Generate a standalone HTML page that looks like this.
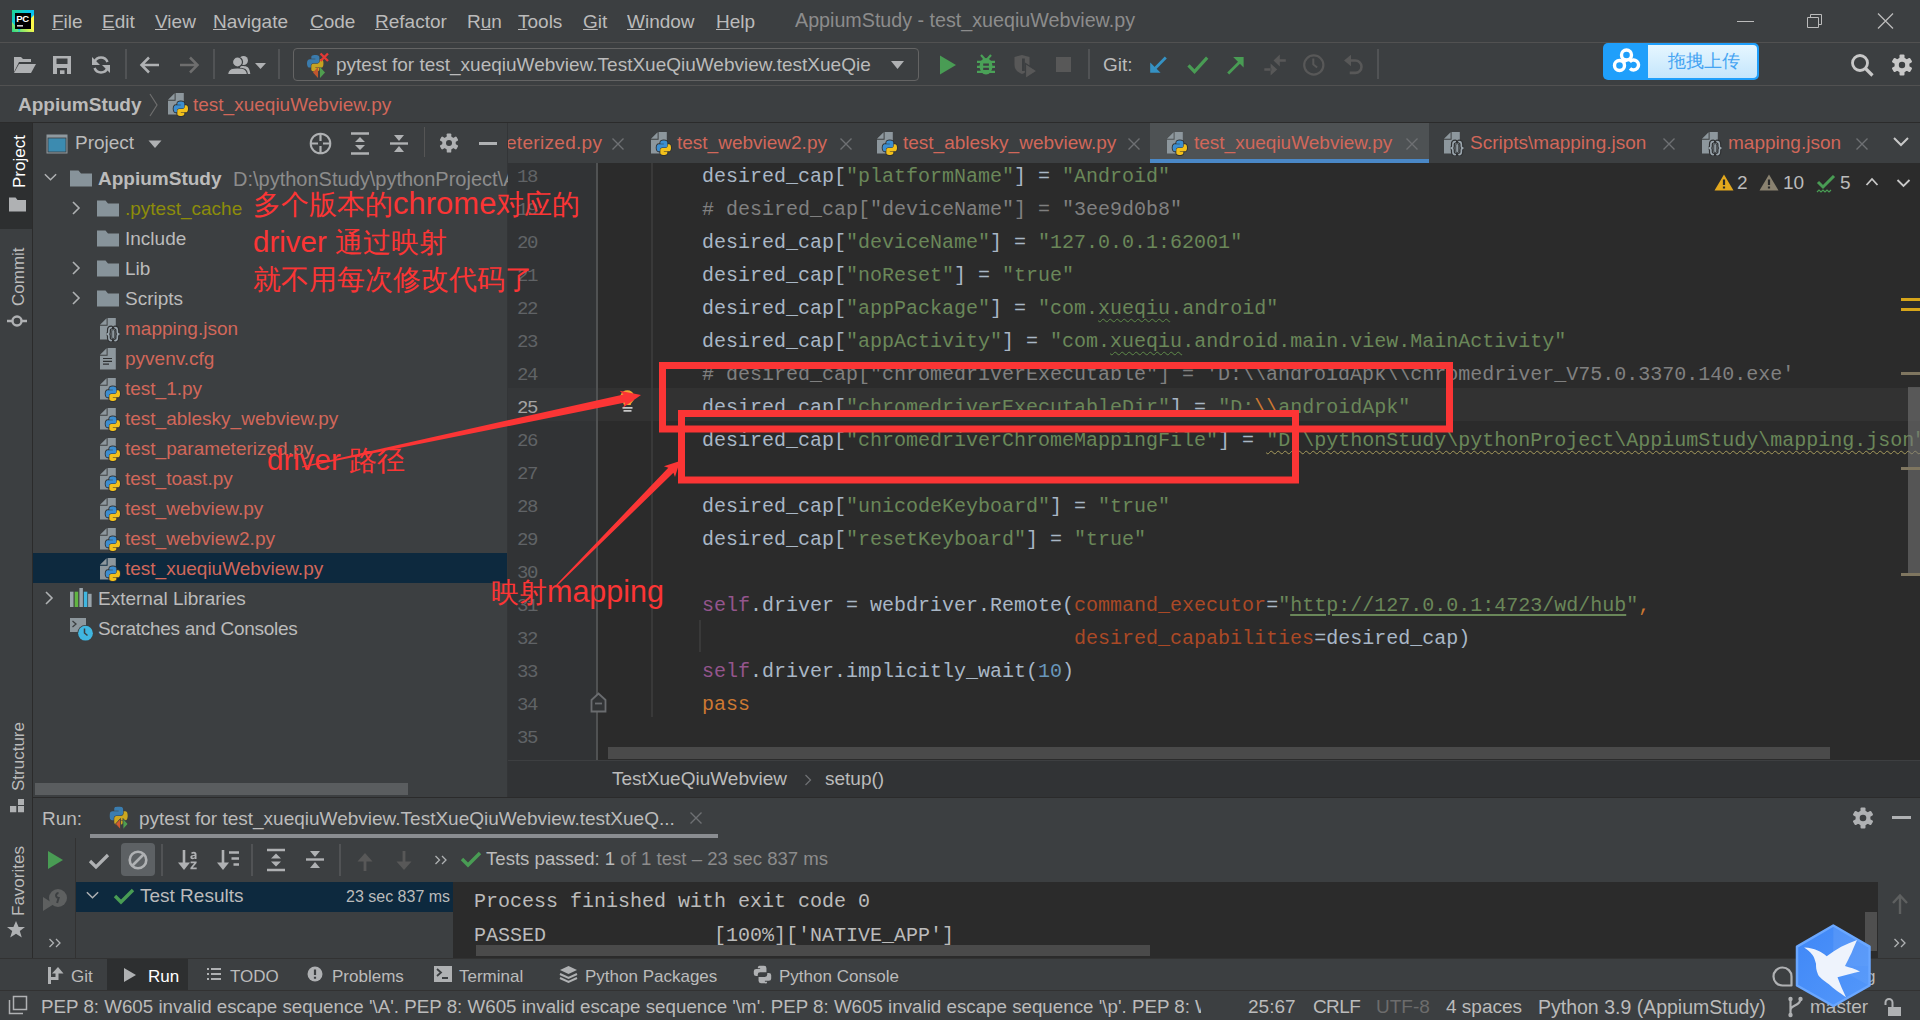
<!DOCTYPE html>
<html><head><meta charset="utf-8">
<style>
*{margin:0;padding:0;box-sizing:border-box}
html,body{width:1920px;height:1020px;overflow:hidden;background:#3c3f41;font-family:"Liberation Sans",sans-serif;color:#bbbbbb}
.a{position:absolute}
.t{position:absolute;white-space:pre;font-size:19px;line-height:22px}
.mono{font-family:"Liberation Mono",monospace}
s1{color:#6a8759;text-decoration:none}c1{color:#808080}k1{color:#cc7832}p1{color:#94558d}n1{color:#aa4926}d1{color:#6897bb}u1{text-decoration:underline;text-decoration-color:#6a8759;text-underline-offset:3px}w1{text-decoration:underline wavy #5f8a4a;text-decoration-thickness:1px;text-underline-offset:4px}w2{text-decoration:underline wavy #a69a5c;text-decoration-thickness:1px;text-underline-offset:4px}
.hl{position:absolute;height:1px;background:#323232}
.vl{position:absolute;width:1px;background:#323232}
</style></head><body>

<svg width="0" height="0" style="position:absolute">
<defs>
<symbol id="doc" viewBox="0 0 24 24"><path d="M1 6.8L7.6 0.2V6.8z" fill="#8d979d"/><path d="M8.6 0H16.8V21.4H1V7.8H8.6z" fill="#8d979d"/></symbol>
<symbol id="pylogo" viewBox="0 0 111 111"><path d="M54.919 0.001c-4.584.022-8.961.413-12.813 1.095C30.76 3.099 28.7 7.295 28.7 15.032v10.219h26.813v3.406H18.638c-7.793 0-14.616 4.684-16.75 13.594-2.462 10.213-2.571 16.586 0 27.25 1.905 7.938 6.457 13.594 14.25 13.594h9.219v-12.25c0-8.85 7.657-16.656 16.75-16.656h26.781c7.454 0 13.406-6.138 13.406-13.625V15.032c0-7.266-6.13-12.725-13.406-13.937C64.282.328 59.502-.02 54.919.001z" fill="#3a8fd0"/><path d="M85.638 28.657v11.906c0 9.231-7.826 17-16.75 17H42.106c-7.336 0-13.406 6.278-13.406 13.625v25.531c0 7.266 6.319 11.54 13.406 13.625 8.487 2.496 16.626 2.947 26.781 0 6.75-1.954 13.406-5.888 13.406-13.625V86.501H55.513v-3.406H95.7c7.793 0 10.696-5.436 13.406-13.594 2.8-8.399 2.68-16.476 0-27.25-1.926-7.757-5.604-13.594-13.406-13.594h-10.062z" fill="#f5c518"/></symbol>
<symbol id="pyf" viewBox="0 0 24 24"><use href="#doc"/>
<g transform="translate(6.6 8.5) scale(0.13)"><path d="M54.919 0.001c-4.584.022-8.961.413-12.813 1.095C30.76 3.099 28.7 7.295 28.7 15.032v10.219h26.813v3.406H18.638c-7.793 0-14.616 4.684-16.75 13.594-2.462 10.213-2.571 16.586 0 27.25 1.905 7.938 6.457 13.594 14.25 13.594h9.219v-12.25c0-8.85 7.657-16.656 16.75-16.656h26.781c7.454 0 13.406-6.138 13.406-13.625V15.032c0-7.266-6.13-12.725-13.406-13.937C64.282.328 59.502-.02 54.919.001z" fill="none" stroke="#2f3133" stroke-width="14"/><path d="M85.638 28.657v11.906c0 9.231-7.826 17-16.75 17H42.106c-7.336 0-13.406 6.278-13.406 13.625v25.531c0 7.266 6.319 11.54 13.406 13.625 8.487 2.496 16.626 2.947 26.781 0 6.75-1.954 13.406-5.888 13.406-13.625V86.501H55.513v-3.406H95.7c7.793 0 10.696-5.436 13.406-13.594 2.8-8.399 2.68-16.476 0-27.25-1.926-7.757-5.604-13.594-13.406-13.594h-10.062z" fill="none" stroke="#2f3133" stroke-width="14"/><path d="M54.919 0.001c-4.584.022-8.961.413-12.813 1.095C30.76 3.099 28.7 7.295 28.7 15.032v10.219h26.813v3.406H18.638c-7.793 0-14.616 4.684-16.75 13.594-2.462 10.213-2.571 16.586 0 27.25 1.905 7.938 6.457 13.594 14.25 13.594h9.219v-12.25c0-8.85 7.657-16.656 16.75-16.656h26.781c7.454 0 13.406-6.138 13.406-13.625V15.032c0-7.266-6.13-12.725-13.406-13.937C64.282.328 59.502-.02 54.919.001z" fill="#3d8ed0"/><path d="M85.638 28.657v11.906c0 9.231-7.826 17-16.75 17H42.106c-7.336 0-13.406 6.278-13.406 13.625v25.531c0 7.266 6.319 11.54 13.406 13.625 8.487 2.496 16.626 2.947 26.781 0 6.75-1.954 13.406-5.888 13.406-13.625V86.501H55.513v-3.406H95.7c7.793 0 10.696-5.436 13.406-13.594 2.8-8.399 2.68-16.476 0-27.25-1.926-7.757-5.604-13.594-13.406-13.594h-10.062z" fill="#f2c01b"/></g>
</symbol>
<symbol id="jsonf" viewBox="0 0 24 24"><use href="#doc"/>
<g fill="none" stroke-linecap="round"><path d="M12.3 9.6C10.6 9.6 9.9 10.4 9.9 12.2V14.2C9.9 15.2 9.2 16 7.8 16.1C9.2 16.2 9.9 17 9.9 18V20C9.9 21.8 10.6 22.6 12.3 22.6M15.9 9.6C17.6 9.6 18.3 10.4 18.3 12.2V14.2C18.3 15.2 19 16 20.4 16.1C19 16.2 18.3 17 18.3 18V20C18.3 21.8 17.6 22.6 15.9 22.6" stroke="#2f3133" stroke-width="4"/>
<path d="M12.3 9.6C10.6 9.6 9.9 10.4 9.9 12.2V14.2C9.9 15.2 9.2 16 7.8 16.1C9.2 16.2 9.9 17 9.9 18V20C9.9 21.8 10.6 22.6 12.3 22.6M15.9 9.6C17.6 9.6 18.3 10.4 18.3 12.2V14.2C18.3 15.2 19 16 20.4 16.1C19 16.2 18.3 17 18.3 18V20C18.3 21.8 17.6 22.6 15.9 22.6" stroke="#9aa5ad" stroke-width="1.6"/></g>
<rect x="12.7" y="11.6" width="3" height="9" rx="1.5" fill="#8d979d" stroke="#2f3133" stroke-width="0.8"/>
</symbol>
<symbol id="txtf" viewBox="0 0 24 24"><use href="#doc"/><path d="M4 10.5h9M4 13.3h9M4 16.1h6" stroke="#2f3133" stroke-width="1.2"/></symbol>
<symbol id="fold" viewBox="0 0 22 17"><path d="M0 0.5h8.5l2.5 3H22V16.5H0z" fill="#87939a"/></symbol>
<symbol id="chevr" viewBox="0 0 10 16"><path d="M2 2l6 6l-6 6" fill="none" stroke="#afb1b3" stroke-width="1.6"/></symbol>
<symbol id="chevd" viewBox="0 0 16 10"><path d="M2 2l6 6l6-6" fill="none" stroke="#afb1b3" stroke-width="1.6"/></symbol>
<symbol id="xcl" viewBox="0 0 14 14"><path d="M1.5 1.5l11 11M12.5 1.5l-11 11" stroke="#6e7073" stroke-width="1.4"/></symbol>
<symbol id="gear" viewBox="0 0 22 22"><g fill="#afb1b3"><circle cx="11" cy="11" r="7.5"/><rect x="8.5" y="0.5" width="5" height="21" rx="1"/><rect x="8.5" y="0.5" width="5" height="21" rx="1" transform="rotate(60 11 11)"/><rect x="8.5" y="0.5" width="5" height="21" rx="1" transform="rotate(120 11 11)"/></g><circle cx="11" cy="11" r="3.3" fill="#3c3f41"/></symbol>
</defs></svg>
<!-- ===== TITLE BAR ===== -->
<svg class="a" style="left:12px;top:10px" width="22" height="22" viewBox="0 0 22 22">
<defs><linearGradient id="pcg1" x1="0" y1="0" x2="1" y2="1"><stop offset="0" stop-color="#21d789"/><stop offset="0.45" stop-color="#07c3f2"/><stop offset="1" stop-color="#07c3f2"/></linearGradient><linearGradient id="pcg2" x1="0" y1="1" x2="1" y2="0"><stop offset="0" stop-color="#21d789"/><stop offset="0.55" stop-color="#fcf84a"/><stop offset="1" stop-color="#fcf84a"/></linearGradient></defs>
<rect width="22" height="22" fill="url(#pcg1)"/><path d="M0 22L0 12L8 22z M22 22V5L6 22z" fill="url(#pcg2)"/><rect x="3" y="3" width="16" height="16" fill="#000"/>
<text x="4.2" y="11.8" font-family="Liberation Sans" font-weight="bold" font-size="9.5" fill="#fff" letter-spacing="-0.3">PC</text>
<rect x="5" y="15.2" width="6" height="1.3" fill="#fff"/></svg>
<div class="t" style="left:52px;top:11px"><u>F</u>ile</div>
<div class="t" style="left:102px;top:11px"><u>E</u>dit</div>
<div class="t" style="left:155px;top:11px"><u>V</u>iew</div>
<div class="t" style="left:213px;top:11px"><u>N</u>avigate</div>
<div class="t" style="left:310px;top:11px"><u>C</u>ode</div>
<div class="t" style="left:375px;top:11px"><u>R</u>efactor</div>
<div class="t" style="left:467px;top:11px">R<u>u</u>n</div>
<div class="t" style="left:518px;top:11px"><u>T</u>ools</div>
<div class="t" style="left:583px;top:11px"><u>G</u>it</div>
<div class="t" style="left:627px;top:11px"><u>W</u>indow</div>
<div class="t" style="left:716px;top:11px"><u>H</u>elp</div>
<div class="t" style="left:795px;top:9px;font-size:19.7px;color:#8c8c8c">AppiumStudy - test_xueqiuWebview.py</div>
<div class="a" style="left:1737px;top:21px;width:17px;height:1px;background:#bbbbbb"></div>
<svg class="a" style="left:1805px;top:12px" width="20" height="18" viewBox="0 0 20 18"><path d="M2.5 5.5h11v10h-11z M5.5 5.5v-3h11v10h-3" fill="none" stroke="#bbbbbb" stroke-width="1"/></svg>
<svg class="a" style="left:1876px;top:12px" width="20" height="18" viewBox="0 0 20 18"><path d="M2 1.5l15 15M17 1.5l-15 15" fill="none" stroke="#bbbbbb" stroke-width="1.3"/></svg>
<!-- ===== TOOLBAR ===== -->
<svg class="a" style="left:13px;top:55px" width="24" height="20" viewBox="0 0 24 20"><path d="M1 2h7l2 2h8v3H6L1 17z" fill="#afb1b3"/><path d="M6 9h17l-5 9H1z" fill="#afb1b3"/></svg>
<svg class="a" style="left:52px;top:55px" width="20" height="20" viewBox="0 0 20 20"><path d="M1 1h18v18H1z M4.5 3.5v5.5h11V3.5z M5 13v6h10v-6z" fill="#afb1b3" fill-rule="evenodd"/><rect x="8" y="15.3" width="4.5" height="3.7" fill="#afb1b3"/></svg>
<svg class="a" style="left:91px;top:55px" width="20" height="20" viewBox="0 0 20 20"><path d="M16.5 7A7 7 0 0 0 3.5 7M3.5 13A7 7 0 0 0 16.5 13" fill="none" stroke="#afb1b3" stroke-width="2.5"/><path d="M1 2v8h8z M19 18v-8h-8z" fill="#afb1b3"/></svg>
<div class="vl" style="left:125px;top:49px;height:30px;width:2px;background:#515355"></div>
<svg class="a" style="left:139px;top:55px" width="21" height="20" viewBox="0 0 21 20"><path d="M20 10H3M10 2.5L2.5 10L10 17.5" fill="none" stroke="#afb1b3" stroke-width="2.5"/></svg>
<svg class="a" style="left:179px;top:55px" width="21" height="20" viewBox="0 0 21 20"><path d="M1 10h17M11 2.5L18.5 10L11 17.5" fill="none" stroke="#6e6e6e" stroke-width="2.5"/></svg>
<div class="vl" style="left:213px;top:49px;height:30px;width:2px;background:#515355"></div>
<svg class="a" style="left:227px;top:55px" width="42" height="20" viewBox="0 0 42 20"><circle cx="16.5" cy="5.5" r="4.5" fill="#afb1b3"/><path d="M13 11c3 0 7 0 8 1.5c1.5 1.5 2 4 2.3 6.5H13z" fill="#afb1b3"/><circle cx="10.5" cy="7" r="5" fill="#afb1b3" stroke="#3c3f41" stroke-width="1.2"/><path d="M0.5 19.5c0.5-4.5 2.5-6.5 10-6.5s9.5 2 10 6.5z" fill="#afb1b3" stroke="#3c3f41" stroke-width="1.2"/><path d="M28 8h11l-5.5 6z" fill="#afb1b3"/></svg>
<div class="vl" style="left:278px;top:49px;height:30px;width:2px;background:#515355"></div>
<div class="a" style="left:293px;top:48px;width:626px;height:33px;border:1px solid #646464;border-radius:4px"></div>
<svg class="a" style="left:306px;top:51px" width="26" height="28" viewBox="0 0 26 28"><g transform="translate(1 4) scale(0.15)" opacity="0.75"><use href="#pylogo" width="111" height="111"/></g><path d="M12 16l-5 5.5l5 5.5z" fill="#c1572e"/><path d="M14 16l5 5.5l-5 5.5z" fill="#4f9e4f"/><path d="M14.5 2.5l7.5 7.5M22 2.5l-7.5 7.5" stroke="#e53935" stroke-width="2.4"/></svg>
<div class="t" style="left:336px;top:54px;color:#bbbbbb">pytest for test_xueqiuWebview.TestXueQiuWebview.testXueQie</div>
<svg class="a" style="left:890px;top:59px" width="16" height="12" viewBox="0 0 16 12"><path d="M1 2h13l-6.5 8z" fill="#afb1b3"/></svg>
<svg class="a" style="left:938px;top:54px" width="20" height="22" viewBox="0 0 20 22"><path d="M2 1.5l16 9.5l-16 9.5z" fill="#499c54"/></svg>
<svg class="a" style="left:976px;top:53px" width="20" height="23" viewBox="0 0 20 23"><path d="M5 2l3.5 4M15 2l-3.5 4" stroke="#4aa157" stroke-width="2.2"/><ellipse cx="10" cy="13.3" rx="6.5" ry="8.3" fill="#4aa157"/><path d="M1 8.8h18M1 13.9h18M1 18.8h18" stroke="#4aa157" stroke-width="2.3"/><path d="M7.2 10.5h5.7v2.3H7.2zM7.2 14.8h5.7v2.2H7.2z" fill="#3c3f41"/></svg>
<svg class="a" style="left:1013px;top:54px" width="26" height="25" viewBox="0 0 26 25"><path d="M1.5 3l7.5-2l7.5 2v8c0 5-4 7.5-7.5 9c-3.5-1.5-7.5-4-7.5-9z" fill="#585858"/><path d="M9 4.5h2.8V17H9z" fill="#3c3f41"/><path d="M12.5 9.5l11.5 7.5l-11.5 7.5z" fill="#585858" stroke="#3c3f41" stroke-width="1.2"/></svg>
<div class="a" style="left:1056px;top:57px;width:15px;height:15px;background:#585858"></div>
<div class="vl" style="left:1088px;top:49px;height:30px;width:2px;background:#515355"></div>
<div class="t" style="left:1103px;top:54px">Git:</div>
<svg class="a" style="left:1140px;top:48px" width="236" height="34" viewBox="1140 48 236 34">
<path d="M1165.8 57.6L1154.5 68.9" stroke="#3592c4" stroke-width="2.8"/><path d="M1150.2 62.6V72.8H1160.6z" fill="#3592c4"/>
<path d="M1188.5 65.3l6 6.3l12.7-14" fill="none" stroke="#499c54" stroke-width="3.2"/>
<path d="M1228.2 73.6L1239.5 62.3" stroke="#499c54" stroke-width="2.8"/><path d="M1233.2 57.1H1243.6V67.5z" fill="#499c54"/>
<path d="M1273.5 60.5L1279.8 54.6V66.4z M1279 59.2h6.8v2.6H1279z M1277.2 69.5L1270.6 63.4V75.6z M1264.3 68.2h7v2.6H1264.3z" fill="#585858"/>
<circle cx="1313.8" cy="65" r="9.6" fill="none" stroke="#585858" stroke-width="2.2"/><path d="M1313.3 58.6v5.8l3.8 3.2" fill="none" stroke="#585858" stroke-width="2"/>
<path d="M1344 60.5L1351 54.8V66.2z" fill="#585858"/><path d="M1350 60.5h5.3a6.2 6.2 0 0 1 0 12.4h-5.6" fill="none" stroke="#585858" stroke-width="2.6"/>
</svg>
<div class="vl" style="left:1377px;top:49px;height:30px;width:2px;background:#515355"></div>
<!-- baidu upload -->
<div class="a" style="left:1603px;top:43px;width:156px;height:37px;border-radius:5px;background:#1f9ffb"></div>
<div class="a" style="left:1648px;top:45px;width:109px;height:33px;border-radius:0 4px 4px 0;background:linear-gradient(#e6f6ff,#c4e6fc)"></div>
<svg class="a" style="left:1608px;top:46px" width="38" height="30" viewBox="0 0 38 30"><g fill="none" stroke="#fff" stroke-width="3.4"><circle cx="18.5" cy="9" r="5"/><circle cx="11.5" cy="19.5" r="5"/><path d="M21.7 15.8A5 5 0 1 1 22 22.5"/></g><path d="M15 16.5l4-3" stroke="#fff" stroke-width="3.4"/></svg>
<div class="t" style="left:1668px;top:50px;font-size:18px;color:#45a4f2">拖拽上传</div>
<svg class="a" style="left:1850px;top:53px" width="26" height="24" viewBox="0 0 26 24"><circle cx="10" cy="10" r="7.5" fill="none" stroke="#c8c8c8" stroke-width="2.8"/><path d="M15.5 15.5l7 7" stroke="#c8c8c8" stroke-width="3.2"/></svg>
<svg class="a" style="left:1891px;top:54px" width="22" height="22" viewBox="0 0 22 22"><g fill="#c8c8c8"><circle cx="11" cy="11" r="7.5"/><rect x="8.5" y="0.5" width="5" height="21" rx="1"/><rect x="8.5" y="0.5" width="5" height="21" rx="1" transform="rotate(60 11 11)"/><rect x="8.5" y="0.5" width="5" height="21" rx="1" transform="rotate(120 11 11)"/></g><circle cx="11" cy="11" r="3.2" fill="#3c3f41"/></svg>
<!-- ===== NAVBAR ===== -->
<div class="t" style="left:18px;top:94px;font-weight:bold">AppiumStudy</div>
<svg class="a" style="left:148px;top:93px" width="12" height="24" viewBox="0 0 12 24"><path d="M2 1l7 11l-7 11" fill="none" stroke="#6e6e6e" stroke-width="1.2"/></svg>
<svg class="a" style="left:167px;top:93px" width="24" height="24"><use href="#pyf"/></svg>
<div class="t" style="left:193px;top:94px;color:#d1675a">test_xueqiuWebview.py</div>

<div class="hl" style="left:0;top:42px;width:1920px;background:#515151"></div>
<!-- toolbar -->
<div class="hl" style="left:0;top:85px;width:1920px;background:#515151"></div>
<!-- navbar -->
<div class="hl" style="left:0;top:122px;width:1920px;background:#2b2b2b"></div>
<!-- left strip -->
<div class="a" style="left:0;top:123px;width:32px;height:867px;background:#3c3f41"></div>
<div class="vl" style="left:32px;top:123px;height:835px;background:#2b2b2b"></div>
<!-- project panel -->
<div class="a" style="left:33px;top:123px;width:474px;height:674px;background:#3c3f41"></div>
<div class="vl" style="left:507px;top:123px;height:674px;background:#333537"></div>

<!-- ===== LEFT STRIP ===== -->
<div class="a" style="left:0;top:123px;width:32px;height:106px;background:#2d2f30"></div>
<div class="t" style="left:10.5px;top:188px;font-size:17px;line-height:18px;color:#ffffff;transform:rotate(-90deg);transform-origin:0 0">Project</div>
<svg class="a" style="left:9px;top:197px" width="17" height="15" viewBox="0 0 22 17" preserveAspectRatio="none"><path d="M0 0.5h8.5l2.5 3H22V16.5H0z" fill="#afb1b3"/></svg>
<div class="t" style="left:10px;top:306px;font-size:17px;line-height:18px;color:#bbbbbb;transform:rotate(-90deg);transform-origin:0 0">Commit</div>
<svg class="a" style="left:6px;top:312px" width="22" height="18" viewBox="0 0 22 18"><circle cx="11" cy="9" r="4.5" fill="none" stroke="#afb1b3" stroke-width="2.4"/><path d="M1 9h5M16 9h5" stroke="#afb1b3" stroke-width="2.4"/></svg>
<div class="t" style="left:10px;top:791px;font-size:17px;line-height:18px;color:#bbbbbb;transform:rotate(-90deg);transform-origin:0 0">Structure</div>
<svg class="a" style="left:10px;top:799px" width="14" height="14" viewBox="0 0 14 14"><path d="M0 7h6.3v6.3H0zM8 7h6v6.3H8zM8 0h6v6H8z" fill="#afb1b3"/></svg>
<div class="t" style="left:10px;top:916px;font-size:17px;line-height:18px;color:#bbbbbb;transform:rotate(-90deg);transform-origin:0 0">Favorites</div>
<svg class="a" style="left:6px;top:920px" width="20" height="20" viewBox="0 0 20 20"><path d="M10 1l2.6 6h6.4l-5.2 4l2 6.5L10 13.7l-5.8 3.8l2-6.5L1 7h6.4z" fill="#afb1b3"/></svg>
<!-- ===== PROJECT PANEL ===== -->
<svg class="a" style="left:46px;top:134px" width="22" height="20" viewBox="0 0 22 20"><rect x="0.5" y="0.5" width="21" height="19" fill="#8f999f"/><rect x="2" y="4" width="18" height="14" fill="#3c8bb0" stroke="#3c3f41" stroke-width="0.8"/></svg>
<div class="t" style="left:75px;top:132px">Project</div>
<svg class="a" style="left:148px;top:140px" width="14" height="9" viewBox="0 0 14 9"><path d="M0.5 0.5h13l-6.5 7.5z" fill="#afb1b3"/></svg>
<svg class="a" style="left:309px;top:132px" width="23" height="23" viewBox="0 0 23 23"><circle cx="11.5" cy="11.5" r="9.8" fill="none" stroke="#afb1b3" stroke-width="2"/><path d="M11.5 1v8M11.5 14v8M1 11.5h8M14 11.5h8" stroke="#afb1b3" stroke-width="2.2"/></svg>
<svg class="a" style="left:350px;top:132px" width="20" height="23" viewBox="0 0 20 23"><path d="M1 1.5h18M1 21.5h18" stroke="#afb1b3" stroke-width="2.6"/><path d="M10 5l5 5H5zM10 18l5-5H5z" fill="#afb1b3"/></svg>
<svg class="a" style="left:389px;top:133px" width="20" height="21" viewBox="0 0 20 21"><path d="M1 10.5h18" stroke="#afb1b3" stroke-width="2.4"/><path d="M10 8l5-6H5zM10 13l5 6H5z" fill="#afb1b3"/></svg>
<div class="vl" style="left:424px;top:127px;height:30px;background:#555555"></div>
<svg class="a" style="left:439px;top:133px" width="20" height="20" viewBox="0 0 22 22"><use href="#gear"/></svg>
<div class="a" style="left:479px;top:142px;width:18px;height:3px;background:#afb1b3"></div>
<!-- tree -->
<div class="a" style="left:33px;top:553px;width:474px;height:30px;background:#0d293e"></div>
<svg class="a" style="left:43px;top:172px" width="15" height="10"><use href="#chevd"/></svg>
<svg class="a" style="left:70px;top:170px" width="22" height="17"><use href="#fold"/></svg>
<div class="t" style="left:98px;top:168px;font-weight:bold">AppiumStudy</div>
<div class="t" style="left:233px;top:167.5px;font-size:20px;color:#8c8c8c">D:\pythonStudy\pythonProject\AppiumStudy</div>
<svg class="a" style="left:71px;top:200px" width="10" height="16"><use href="#chevr"/></svg>
<svg class="a" style="left:97px;top:200px" width="22" height="17"><use href="#fold"/></svg>
<div class="t" style="left:125px;top:198px;color:#8c8c0a">.pytest_cache</div>
<svg class="a" style="left:97px;top:230px" width="22" height="17"><use href="#fold"/></svg>
<div class="t" style="left:125px;top:228px">Include</div>
<svg class="a" style="left:71px;top:260px" width="10" height="16"><use href="#chevr"/></svg>
<svg class="a" style="left:97px;top:260px" width="22" height="17"><use href="#fold"/></svg>
<div class="t" style="left:125px;top:258px">Lib</div>
<svg class="a" style="left:71px;top:290px" width="10" height="16"><use href="#chevr"/></svg>
<svg class="a" style="left:97px;top:290px" width="22" height="17"><use href="#fold"/></svg>
<div class="t" style="left:125px;top:288px">Scripts</div>
<svg class="a" style="left:99px;top:318px" width="24" height="24"><use href="#jsonf"/></svg>
<div class="t" style="left:125px;top:318px;color:#d1675a">mapping.json</div>
<svg class="a" style="left:99px;top:348px" width="24" height="24"><use href="#txtf"/></svg>
<div class="t" style="left:125px;top:348px;color:#d1675a">pyvenv.cfg</div>
<svg class="a" style="left:99px;top:378px" width="24" height="24"><use href="#pyf"/></svg>
<div class="t" style="left:125px;top:378px;color:#d1675a">test_1.py</div>
<svg class="a" style="left:99px;top:408px" width="24" height="24"><use href="#pyf"/></svg>
<div class="t" style="left:125px;top:408px;color:#d1675a">test_ablesky_webview.py</div>
<svg class="a" style="left:99px;top:438px" width="24" height="24"><use href="#pyf"/></svg>
<div class="t" style="left:125px;top:438px;color:#d1675a">test_parameterized.py</div>
<svg class="a" style="left:99px;top:468px" width="24" height="24"><use href="#pyf"/></svg>
<div class="t" style="left:125px;top:468px;color:#d1675a">test_toast.py</div>
<svg class="a" style="left:99px;top:498px" width="24" height="24"><use href="#pyf"/></svg>
<div class="t" style="left:125px;top:498px;color:#d1675a">test_webview.py</div>
<svg class="a" style="left:99px;top:528px" width="24" height="24"><use href="#pyf"/></svg>
<div class="t" style="left:125px;top:528px;color:#d1675a">test_webview2.py</div>
<svg class="a" style="left:99px;top:558px" width="24" height="24"><use href="#pyf"/></svg>
<div class="t" style="left:125px;top:558px;color:#d1675a">test_xueqiuWebview.py</div>
<svg class="a" style="left:44px;top:590px" width="10" height="16"><use href="#chevr"/></svg>
<svg class="a" style="left:69px;top:587px" width="24" height="21" viewBox="0 0 24 21"><rect x="1" y="4.7" width="3.5" height="15.3" fill="#9aa4ab"/><rect x="5.7" y="4.7" width="3.5" height="15.3" fill="#62b543"/><rect x="10.4" y="1" width="3.5" height="19" fill="#9aa4ab"/><rect x="14.8" y="4.7" width="3.5" height="15.3" fill="#40b6e0"/><rect x="19.1" y="6.8" width="3.5" height="13.2" fill="#9aa4ab"/></svg>
<div class="t" style="left:98px;top:588px">External Libraries</div>
<svg class="a" style="left:69px;top:617px" width="26" height="25" viewBox="0 0 26 25"><path d="M1 1h16v14H1z" fill="#8d979d"/><path d="M3.5 4l3.5 3l-3.5 3" fill="none" stroke="#3c3f41" stroke-width="1.3"/><circle cx="16.5" cy="16.2" r="8.2" fill="#3c3f41"/><circle cx="16.5" cy="16.2" r="7.4" fill="#40b6e0"/><path d="M15.5 11.5v4.5l3 2.5" fill="none" stroke="#3c3f41" stroke-width="1.5"/></svg>
<div class="t" style="left:98px;top:618px;letter-spacing:-0.3px">Scratches and Consoles</div>
<div class="a" style="left:35px;top:783px;width:373px;height:12px;background:#5a5d5f"></div>

<!-- ===== EDITOR TABS ===== -->
<div class="a" style="left:508px;top:123px;width:1412px;height:40px;background:#3c3f41"></div>
<div class="a" style="left:508px;top:123px;width:100px;height:40px;overflow:hidden"><div class="t" style="left:-2px;top:9px;letter-spacing:0.3px;color:#d1675a">eterized.py</div></div>
<svg class="a" style="left:611px;top:137px" width="14" height="14"><use href="#xcl"/></svg>
<svg class="a" style="left:650px;top:132px" width="24" height="24"><use href="#pyf"/></svg>
<div class="t" style="left:677px;top:132px;color:#d1675a">test_webview2.py</div>
<svg class="a" style="left:839px;top:137px" width="14" height="14"><use href="#xcl"/></svg>
<svg class="a" style="left:876px;top:132px" width="24" height="24"><use href="#pyf"/></svg>
<div class="t" style="left:903px;top:132px;color:#d1675a">test_ablesky_webview.py</div>
<svg class="a" style="left:1127px;top:137px" width="14" height="14"><use href="#xcl"/></svg>
<div class="a" style="left:1150px;top:123px;width:279px;height:40px;background:#4e5254"></div>
<div class="a" style="left:1150px;top:159px;width:279px;height:4px;background:#4a88c7"></div>
<svg class="a" style="left:1166px;top:132px" width="24" height="24"><use href="#pyf"/></svg>
<div class="t" style="left:1194px;top:132px;color:#d1675a">test_xueqiuWebview.py</div>
<svg class="a" style="left:1405px;top:137px" width="14" height="14"><use href="#xcl"/></svg>
<svg class="a" style="left:1443px;top:132px" width="24" height="24"><use href="#jsonf"/></svg>
<div class="t" style="left:1470px;top:132px;color:#d1675a">Scripts\mapping.json</div>
<svg class="a" style="left:1662px;top:137px" width="14" height="14"><use href="#xcl"/></svg>
<svg class="a" style="left:1701px;top:132px" width="24" height="24"><use href="#jsonf"/></svg>
<div class="t" style="left:1728px;top:132px;color:#d1675a">mapping.json</div>
<svg class="a" style="left:1855px;top:137px" width="14" height="14"><use href="#xcl"/></svg>
<svg class="a" style="left:1892px;top:136px" width="18" height="12" viewBox="0 0 18 12"><path d="M2 2l7 7l7-7" fill="none" stroke="#c8c8c8" stroke-width="2"/></svg>
<!-- ===== GUTTER + EDITOR ===== -->
<div class="a" style="left:508px;top:163px;width:90px;height:597px;background:#313335"></div>
<div class="a" style="left:598px;top:163px;width:1322px;height:597px;background:#2b2b2b"></div>
<div class="a" style="left:508px;top:388px;width:90px;height:33px;background:#353739"></div>
<div class="a" style="left:598px;top:388px;width:1322px;height:33px;background:#323232"></div>
<div class="a" style="left:596px;top:163px;width:2px;height:597px;background:#505253"></div>
<div class="a" style="left:651px;top:163px;width:2px;height:554px;background:#393939"></div>
<div class="a" style="left:699px;top:620px;width:2px;height:32px;background:#393939"></div>
<div class="a mono" style="left:508px;top:161px;width:29px;text-align:right;font-size:19px;letter-spacing:-1.4px;line-height:33px;color:#606366;white-space:pre">18
19
20
21
22
23
24
<span style="color:#a4a3a3">25</span>
26
27
28
29
30
31
32
33
34
35</div>
<svg class="a" style="left:590px;top:692px" width="17" height="21" viewBox="0 0 17 21"><path d="M1.5 19.5V8L8.5 1.5L15.5 8V19.5z" fill="#313335" stroke="#6a6c6f" stroke-width="1.8"/><path d="M5 11.5h7" stroke="#6a6c6f" stroke-width="1.8"/></svg>
<div class="a mono" style="left:606px;top:160px;font-size:20px;line-height:33px;color:#a9b7c6;white-space:pre">        desired_cap[<s1>"platformName"</s1>] = <s1>"Android"</s1>
        <c1># desired_cap["deviceName"] = "3ee9d0b8"</c1>
        desired_cap[<s1>"deviceName"</s1>] = <s1>"127.0.0.1:62001"</s1>
        desired_cap[<s1>"noReset"</s1>] = <s1>"true"</s1>
        desired_cap[<s1>"appPackage"</s1>] = <s1>"com.<w1>xueqiu</w1>.android"</s1>
        desired_cap[<s1>"appActivity"</s1>] = <s1>"com.<w1>xueqiu</w1>.android.main.view.MainActivity"</s1>
        <c1># desired_cap["chromedriverExecutable"] = 'D:\\androidApk\\chromedriver_V75.0.3370.140.exe'</c1>
        desired_cap[<s1>"chromedriverExecutableDir"</s1>] = <s1>"D:<k1>\\</k1>androidApk"</s1>
        desired_cap[<s1>"chromedriverChromeMappingFile"</s1>] = <s1><w2>"D:\pythonStudy\pythonProject\AppiumStudy\mapping.json"</w2></s1>

        desired_cap[<s1>"unicodeKeyboard"</s1>] = <s1>"true"</s1>
        desired_cap[<s1>"resetKeyboard"</s1>] = <s1>"true"</s1>

        <p1>self</p1>.driver = webdriver.Remote(<n1>command_executor</n1>=<s1>"<u1>http://127.0.0.1:4723/wd/hub</u1>"</s1><k1>,</k1>
                                       <n1>desired_capabilities</n1>=desired_cap)
        <p1>self</p1>.driver.implicitly_wait(<d1>10</d1>)
        <k1>pass</k1>
</div>
<!-- inspection widget -->
<svg class="a" style="left:1714px;top:174px" width="20" height="17" viewBox="0 0 20 17"><path d="M10 0.5L19.5 16.5H0.5z" fill="#e3a81d"/><path d="M10 5.5v5.5M10 12.5v2" stroke="#2b2b2b" stroke-width="2.2"/></svg>
<div class="t" style="left:1737px;top:172px;font-size:19px">2</div>
<svg class="a" style="left:1759px;top:174px" width="20" height="17" viewBox="0 0 20 17"><path d="M10 0.5L19.5 16.5H0.5z" fill="#8a8270"/><path d="M10 5.5v5.5M10 12.5v2" stroke="#2b2b2b" stroke-width="2.2"/></svg>
<div class="t" style="left:1783px;top:172px;font-size:19px">10</div>
<svg class="a" style="left:1816px;top:175px" width="20" height="19" viewBox="0 0 20 19"><path d="M2 7l5 5l11-11" fill="none" stroke="#499c54" stroke-width="3"/><path d="M1 17l2-2l2 2l2-2l2 2l2-2l2 2l2-2" fill="none" stroke="#499c54" stroke-width="1.2"/></svg>
<div class="t" style="left:1840px;top:172px;font-size:19px">5</div>
<svg class="a" style="left:1865px;top:177px" width="14" height="10" viewBox="0 0 14 10"><path d="M1.5 8l5.5-6l5.5 6" fill="none" stroke="#c8c8c8" stroke-width="1.8"/></svg>
<svg class="a" style="left:1896px;top:178px" width="15" height="10" viewBox="0 0 15 10"><path d="M1.5 2l6 6l6-6" fill="none" stroke="#c8c8c8" stroke-width="1.8"/></svg>
<!-- stripe markers -->
<div class="a" style="left:1901px;top:298px;width:19px;height:3px;background:#d6a51a"></div>
<div class="a" style="left:1901px;top:308px;width:19px;height:3px;background:#d6a51a"></div>
<div class="a" style="left:1901px;top:372px;width:19px;height:3px;background:#7f7660"></div>
<div class="a" style="left:1908px;top:387px;width:12px;height:187px;background:rgba(120,120,120,0.55)"></div>
<div class="a" style="left:1901px;top:467px;width:19px;height:3px;background:#7f7660"></div>
<div class="a" style="left:1901px;top:573px;width:19px;height:3px;background:#7f7660"></div>
<!-- hscroll -->
<div class="a" style="left:608px;top:747px;width:1222px;height:12px;background:#4a4a4a"></div>
<!-- editor breadcrumbs -->
<div class="a" style="left:508px;top:760px;width:1412px;height:37px;background:#313335"></div>
<div class="hl" style="left:508px;top:760px;width:1412px;background:#3d3f41"></div>
<div class="t" style="left:612px;top:768px">TestXueQiuWebview</div>
<svg class="a" style="left:804px;top:773px" width="8" height="14" viewBox="0 0 8 14"><path d="M1.5 2l5 5l-5 5" fill="none" stroke="#6e7073" stroke-width="1.3"/></svg>
<div class="t" style="left:825px;top:768px">setup()</div>
<div class="hl" style="left:33px;top:797px;width:1887px;background:#2b2b2b"></div>

<!-- ===== RUN PANEL ===== -->
<div class="a" style="left:33px;top:798px;width:1887px;height:160px;background:#3c3f41"></div>
<div class="t" style="left:42px;top:808px">Run:</div>
<svg class="a" style="left:109px;top:806px" width="24" height="24" viewBox="0 0 24 24"><g transform="translate(0.5 0.5) scale(0.165)" opacity="0.78"><use href="#pylogo" width="111" height="111"/></g><path d="M7 14h11v9H7z" fill="#c9a53a" opacity="0.0"/><path d="M11.5 12.5l-5 5.5l5 5.5z" fill="#d05a30" stroke="#3c3f41" stroke-width="0.8"/><path d="M14 12.5l5 5.5l-5 5.5z" fill="#4f9e4f" stroke="#3c3f41" stroke-width="0.8"/></svg>
<div class="t" style="left:139px;top:808px">pytest for test_xueqiuWebview.TestXueQiuWebview.testXueQ...</div>
<svg class="a" style="left:689px;top:811px" width="14" height="14"><use href="#xcl"/></svg>
<div class="a" style="left:90px;top:834px;width:628px;height:4px;background:#8a8d91"></div>
<svg class="a" style="left:1852px;top:807px" width="22" height="22" viewBox="0 0 22 22"><use href="#gear"/></svg>
<div class="a" style="left:1892px;top:816px;width:19px;height:3px;background:#afb1b3"></div>
<!-- run left column -->
<div class="vl" style="left:75px;top:838px;height:120px;background:#323232"></div>
<svg class="a" style="left:47px;top:850px" width="17" height="20" viewBox="0 0 17 20"><path d="M1 1l15 9l-15 9z" fill="#499c54"/></svg>
<svg class="a" style="left:42px;top:887px" width="26" height="24" viewBox="0 0 26 24"><path d="M1 10l11 7l-11 7z" fill="#5e6060"/><circle cx="16" cy="11" r="9" fill="#5e6060"/><path d="M16.5 6a2.5 2.5 0 1 0 0.1 5l-1.5 5" fill="none" stroke="#3c3f41" stroke-width="2"/></svg>
<svg class="a" style="left:48px;top:937px" width="14" height="12" viewBox="0 0 14 12"><path d="M1.5 2l4 4l-4 4M8 2l4 4l-4 4" fill="none" stroke="#afb1b3" stroke-width="1.3"/></svg>
<!-- run toolbar -->
<svg class="a" style="left:88px;top:851px" width="22" height="20" viewBox="0 0 22 20"><path d="M2 10l6 6l12-12" fill="none" stroke="#afb1b3" stroke-width="3.2"/></svg>
<div class="a" style="left:121px;top:843px;width:34px;height:33px;border-radius:4px;background:#5d6164"></div>
<svg class="a" style="left:127px;top:849px" width="22" height="22" viewBox="0 0 22 22"><circle cx="11" cy="11" r="8.3" fill="none" stroke="#afb1b3" stroke-width="2.6"/><path d="M5 17L17 5" stroke="#afb1b3" stroke-width="2.6"/></svg>
<div class="vl" style="left:161px;top:844px;height:32px;width:2px;background:#515355"></div>
<svg class="a" style="left:177px;top:848px" width="22" height="24" viewBox="0 0 22 24"><path d="M7 2v14" stroke="#afb1b3" stroke-width="2.6"/><path d="M1 14.5h12L7 22z" fill="#afb1b3"/><path d="M14.2 4.6q1.2-0.9 2.7-0.9q2.6 0 2.6 2.5v4.8h-1.9v-0.7q-0.8 0.9-2.1 0.9q-2.2 0-2.2-2q0-2.3 3.5-2.3h0.8q0-1.4-1.1-1.4q-1 0-1.8 0.6z M17.8 7.9h-0.6q-1.9 0-1.9 1q0 0.9 1 0.9q1.5 0 1.5-1.9z" fill="#afb1b3"/><path d="M13.6 13.5h6v1.5l-3.8 4.5h3.9v1.7h-6.3v-1.5l3.8-4.5h-3.6z" fill="#afb1b3"/></svg>
<svg class="a" style="left:216px;top:848px" width="24" height="24" viewBox="0 0 24 24"><path d="M7 2v14" stroke="#afb1b3" stroke-width="2.6"/><path d="M1 14.5h12L7 22z" fill="#afb1b3"/><path d="M13 4.5h10M15.5 10.5h7.5M17.5 16.5h5.5" stroke="#afb1b3" stroke-width="2.6"/></svg>
<div class="vl" style="left:251px;top:844px;height:32px;width:2px;background:#515355"></div>
<svg class="a" style="left:266px;top:848px" width="20" height="24" viewBox="0 0 20 23"><path d="M1 1.5h18M1 21.5h18" stroke="#afb1b3" stroke-width="2.6"/><path d="M10 5l5 5H5zM10 18l5-5H5z" fill="#afb1b3"/></svg>
<svg class="a" style="left:305px;top:849px" width="20" height="21" viewBox="0 0 20 21"><path d="M1 10.5h18" stroke="#afb1b3" stroke-width="2.4"/><path d="M10 8l5-6H5zM10 13l5 6H5z" fill="#afb1b3"/></svg>
<div class="vl" style="left:339px;top:844px;height:32px;width:2px;background:#515355"></div>
<svg class="a" style="left:356px;top:849px" width="18" height="24" viewBox="0 0 18 24"><path d="M9 8v14" stroke="#585858" stroke-width="2.8"/><path d="M1.5 12.5h15L9 4z" fill="#585858"/></svg>
<svg class="a" style="left:395px;top:849px" width="18" height="24" viewBox="0 0 18 24"><path d="M9 2v14" stroke="#585858" stroke-width="2.8"/><path d="M1.5 12.5h15L9 21z" fill="#585858"/></svg>
<svg class="a" style="left:434px;top:854px" width="14" height="12" viewBox="0 0 14 12"><path d="M1.5 2l4 4l-4 4M8 2l4 4l-4 4" fill="none" stroke="#afb1b3" stroke-width="1.3"/></svg>
<svg class="a" style="left:460px;top:851px" width="22" height="17" viewBox="0 0 22 17"><path d="M2 8l6 6l12-12" fill="none" stroke="#499c54" stroke-width="3.4"/></svg>
<div class="t" style="left:486px;top:848px;font-size:18.6px">Tests passed: 1 <span style="color:#8c8c8c">of 1 test – 23 sec 837 ms</span></div>
<!-- results tree -->
<div class="a" style="left:76px;top:882px;width:377px;height:30px;background:#0d293e"></div>
<svg class="a" style="left:85px;top:890px" width="15" height="10"><use href="#chevd"/></svg>
<svg class="a" style="left:113px;top:888px" width="22" height="17" viewBox="0 0 22 17"><path d="M2 8l6 6l12-12" fill="none" stroke="#499c54" stroke-width="3.4"/></svg>
<div class="t" style="left:140px;top:885px">Test Results</div>
<div class="t" style="left:346px;top:887px;font-size:16px;line-height:20px">23 sec 837 ms</div>
<!-- console -->
<div class="a" style="left:453px;top:882px;width:1425px;height:76px;background:#2b2b2b"></div>
<div class="a mono" style="left:474px;top:885px;font-size:20px;line-height:33.5px;color:#bbbbbb;white-space:pre">Process finished with exit code 0
PASSED              [100%]['NATIVE_APP']</div>
<div class="a" style="left:476px;top:945px;width:674px;height:11px;background:#4a4a4a"></div>
<div class="a" style="left:1865px;top:912px;width:12px;height:39px;background:#4f4f4f"></div>
<svg class="a" style="left:1891px;top:893px" width="18" height="22" viewBox="0 0 18 22"><path d="M9 21V3M2 10l7-7.5l7 7.5" fill="none" stroke="#5e6060" stroke-width="2.4"/></svg>
<svg class="a" style="left:1893px;top:937px" width="14" height="12" viewBox="0 0 14 12"><path d="M1.5 2l4 4l-4 4M8 2l4 4l-4 4" fill="none" stroke="#afb1b3" stroke-width="1.3"/></svg>
<div class="hl" style="left:0;top:958px;width:1920px;background:#323232"></div>
<!-- ===== BOTTOM TOOL TABS ===== -->
<div class="a" style="left:107px;top:959px;width:81px;height:31px;background:#2d2f30"></div>
<svg class="a" style="left:46px;top:965px" width="20" height="22" viewBox="0 0 20 22"><path d="M3.5 2v17M3.5 13.5h7.5V7" fill="none" stroke="#afb1b3" stroke-width="3"/><path d="M6 8.5L12 2L17.5 8.5z" fill="#afb1b3"/></svg>
<div class="t" style="left:71px;top:967px;font-size:17px;line-height:20px">Git</div>
<svg class="a" style="left:123px;top:967px" width="14" height="16" viewBox="0 0 14 16"><path d="M1 1l12 7l-12 7z" fill="#afb1b3"/></svg>
<div class="t" style="left:148px;top:967px;font-size:17px;line-height:20px;color:#ffffff">Run</div>
<svg class="a" style="left:206px;top:967px" width="16" height="15" viewBox="0 0 16 15"><path d="M1 2h2M1 7h2M1 12h2M5 2h10M5 7h10M5 12h10" stroke="#afb1b3" stroke-width="2.2"/></svg>
<div class="t" style="left:230px;top:967px;font-size:17px;line-height:20px">TODO</div>
<svg class="a" style="left:307px;top:966px" width="16" height="16" viewBox="0 0 16 16"><circle cx="8" cy="8" r="7.5" fill="#afb1b3"/><path d="M8 3.5v5.5M8 10.8v2" stroke="#3c3f41" stroke-width="2.2"/></svg>
<div class="t" style="left:332px;top:967px;font-size:17px;line-height:20px">Problems</div>
<svg class="a" style="left:434px;top:966px" width="18" height="16" viewBox="0 0 18 16"><path d="M0 0h18v16H0z" fill="#afb1b3"/><path d="M3 3l4 3.5l-4 3.5M8 12h6" fill="none" stroke="#3c3f41" stroke-width="1.8"/></svg>
<div class="t" style="left:459px;top:967px;font-size:17px;line-height:20px">Terminal</div>
<svg class="a" style="left:559px;top:965px" width="19" height="19" viewBox="0 0 19 19"><path d="M9.5 1l8.5 4l-8.5 4l-8.5-4z" fill="#afb1b3"/><path d="M1 9l8.5 4l8.5-4M1 13l8.5 4l8.5-4" fill="none" stroke="#afb1b3" stroke-width="2"/></svg>
<div class="t" style="left:585px;top:967px;font-size:17px;line-height:20px">Python Packages</div>
<svg class="a" style="left:753px;top:965px" width="19" height="19" viewBox="0 0 24 24"><path d="M8 1h6a3 3 0 0 1 3 3v5H9a3 3 0 0 0-3 3v2H4a3 3 0 0 1-3-3V8a3 3 0 0 1 3-3h5V4H6a3 3 0 0 1 2-3z" fill="#afb1b3"/><path d="M16 23h-6a3 3 0 0 1-3-3v-5h8a3 3 0 0 0 3-3v-2h2a3 3 0 0 1 3 3v4a3 3 0 0 1-3 3h-5v1h3a3 3 0 0 1-2 3z" fill="#afb1b3"/></svg>
<div class="t" style="left:779px;top:967px;font-size:17px;line-height:20px">Python Console</div>
<svg class="a" style="left:1772px;top:965px" width="22" height="22" viewBox="0 0 22 22"><path d="M19.5 20.5H10.5a9 9 0 1 1 9-9z" fill="none" stroke="#afb1b3" stroke-width="2.2" stroke-linejoin="round"/></svg>
<div class="t" style="left:1866px;top:967px;font-size:17px;line-height:20px">g</div>
<div class="hl" style="left:0;top:990px;width:1920px;background:#323232"></div>
<!-- ===== STATUS BAR ===== -->
<svg class="a" style="left:8px;top:995px" width="20" height="20" viewBox="0 0 20 20"><path d="M5.5 1.5h13v13h-13z" fill="none" stroke="#afb1b3" stroke-width="1.5"/><path d="M1.5 5v13.5H15" fill="none" stroke="#afb1b3" stroke-width="1.5"/></svg>
<div class="t" style="left:41px;top:996px;font-size:18.75px;width:1160px;overflow:hidden">PEP 8: W605 invalid escape sequence '\A'. PEP 8: W605 invalid escape sequence '\m'. PEP 8: W605 invalid escape sequence '\p'. PEP 8: W605</div>
<div class="t" style="left:1248px;top:996px">25:67</div>
<div class="t" style="left:1313px;top:996px;letter-spacing:-0.6px">CRLF</div>
<div class="t" style="left:1376px;top:996px;color:#6c6c6c">UTF-8</div>
<div class="t" style="left:1446px;top:996px">4 spaces</div>
<div class="t" style="left:1538px;top:996px;font-size:19.5px">Python 3.9 (AppiumStudy)</div>
<svg class="a" style="left:1787px;top:996px" width="18" height="22" viewBox="0 0 18 22"><path d="M3.5 3v16M3.5 14c0-5 10-4 10-11" fill="none" stroke="#afb1b3" stroke-width="2.2"/><circle cx="3.5" cy="3" r="2.2" fill="#afb1b3"/><circle cx="13.5" cy="3" r="2.2" fill="#afb1b3"/><circle cx="3.5" cy="19" r="2.2" fill="#afb1b3"/></svg>
<div class="t" style="left:1810px;top:996px">master</div>
<svg class="a" style="left:1883px;top:997px" width="20" height="20" viewBox="0 0 20 20"><path d="M5 10h13v9H5z" fill="#afb1b3"/><path d="M2.5 8V5.5a3.5 3.5 0 0 1 7 0V10" fill="none" stroke="#afb1b3" stroke-width="2"/></svg>

<svg class="a" style="left:1794px;top:923px" width="78" height="86" viewBox="-2 -2 78 86">
<defs><linearGradient id="hexg" x1="0" y1="0" x2="1" y2="1"><stop offset="0" stop-color="#3f87f7"/><stop offset="1" stop-color="#5498fa"/></linearGradient></defs>
<path d="M37.3 0.5L73.5 21.6V60.5L37.3 81L1 60.5V21.6z" fill="url(#hexg)" stroke="#6aa7ff" stroke-width="2.5" stroke-linejoin="round"/>
<path d="M37.3 2L72 22V41L37.3 41z" fill="#ffffff" opacity="0.08"/>
<path d="M72 41V60L37.3 41z" fill="#ffffff" opacity="0.05"/>
<path d="M8.1 22.6C13 22.5 18 24 21 25.3C25 27 28 29 30.7 31.3C40 24 50 19 61 15.1C59 20 57 24 55.5 28C53 33 51 37 49 41C54 42.5 59 44 64 46.4C57 48 49 50 41.5 52.3C44 59 47 66 50 72.2C44 68 38 64 32.9 59.3C27 55 23 52 22 49.6C20 45 20 42 20 38.8C19 35 18 32 16.7 30.2C14 27 11 24.5 8.1 22.6z" fill="#eef3fc"/>
</svg>
<!-- ===== ANNOTATIONS ===== -->
<svg class="a" style="left:620px;top:390px" width="15" height="22" viewBox="0 0 15 22"><path d="M7.3 0.3a7 7 0 0 0-4.6 12.3c0.8 0.8 1.2 1.5 1.2 2.4h6.8c0-0.9 0.4-1.6 1.2-2.4A7 7 0 0 0 7.3 0.3z" fill="#f0a732"/><path d="M2.5 17.8h10M3.5 20.8h8" stroke="#c8c8c8" stroke-width="1.8"/></svg>
<svg class="a" style="left:0;top:0" width="1920" height="1020" viewBox="0 0 1920 1020">
<g fill="none" stroke="#fb3535" stroke-width="7">
<rect x="662.5" y="365.5" width="787" height="63.5"/>
<rect x="681.5" y="413.5" width="614" height="66.5"/>
</g>
<path d="M302.1 467.6 L625.2 402.6 L623.2 407.5 L641.0 395.0 L619.7 390.8 L623.5 394.4 L301.9 466.4Z" fill="#fb3535"/>
<path d="M556.4 586.4 L673.4 472.8 L675.0 477.1 L680.0 461.0 L663.9 466.2 L668.3 467.7 L555.6 585.6Z" fill="#fb3535"/>
</svg>
<div class="t" style="left:253px;top:184.5px;font-size:28px;line-height:37px;color:#fb3535">多个版本的<span style="font-size:31px">chrome</span>对应的
<span style="font-size:29.5px">driver</span> 通过映射
就不用每次修改代码了</div>
<div class="t" style="left:267px;top:441px;font-size:28px;line-height:37px;color:#fb3535"><span style="font-size:29.5px">driver</span> 路径</div>
<div class="t" style="left:491px;top:573px;font-size:28px;line-height:37px;color:#fb3535">映射<span style="font-size:30.5px">mapping</span></div>
</body></html>
